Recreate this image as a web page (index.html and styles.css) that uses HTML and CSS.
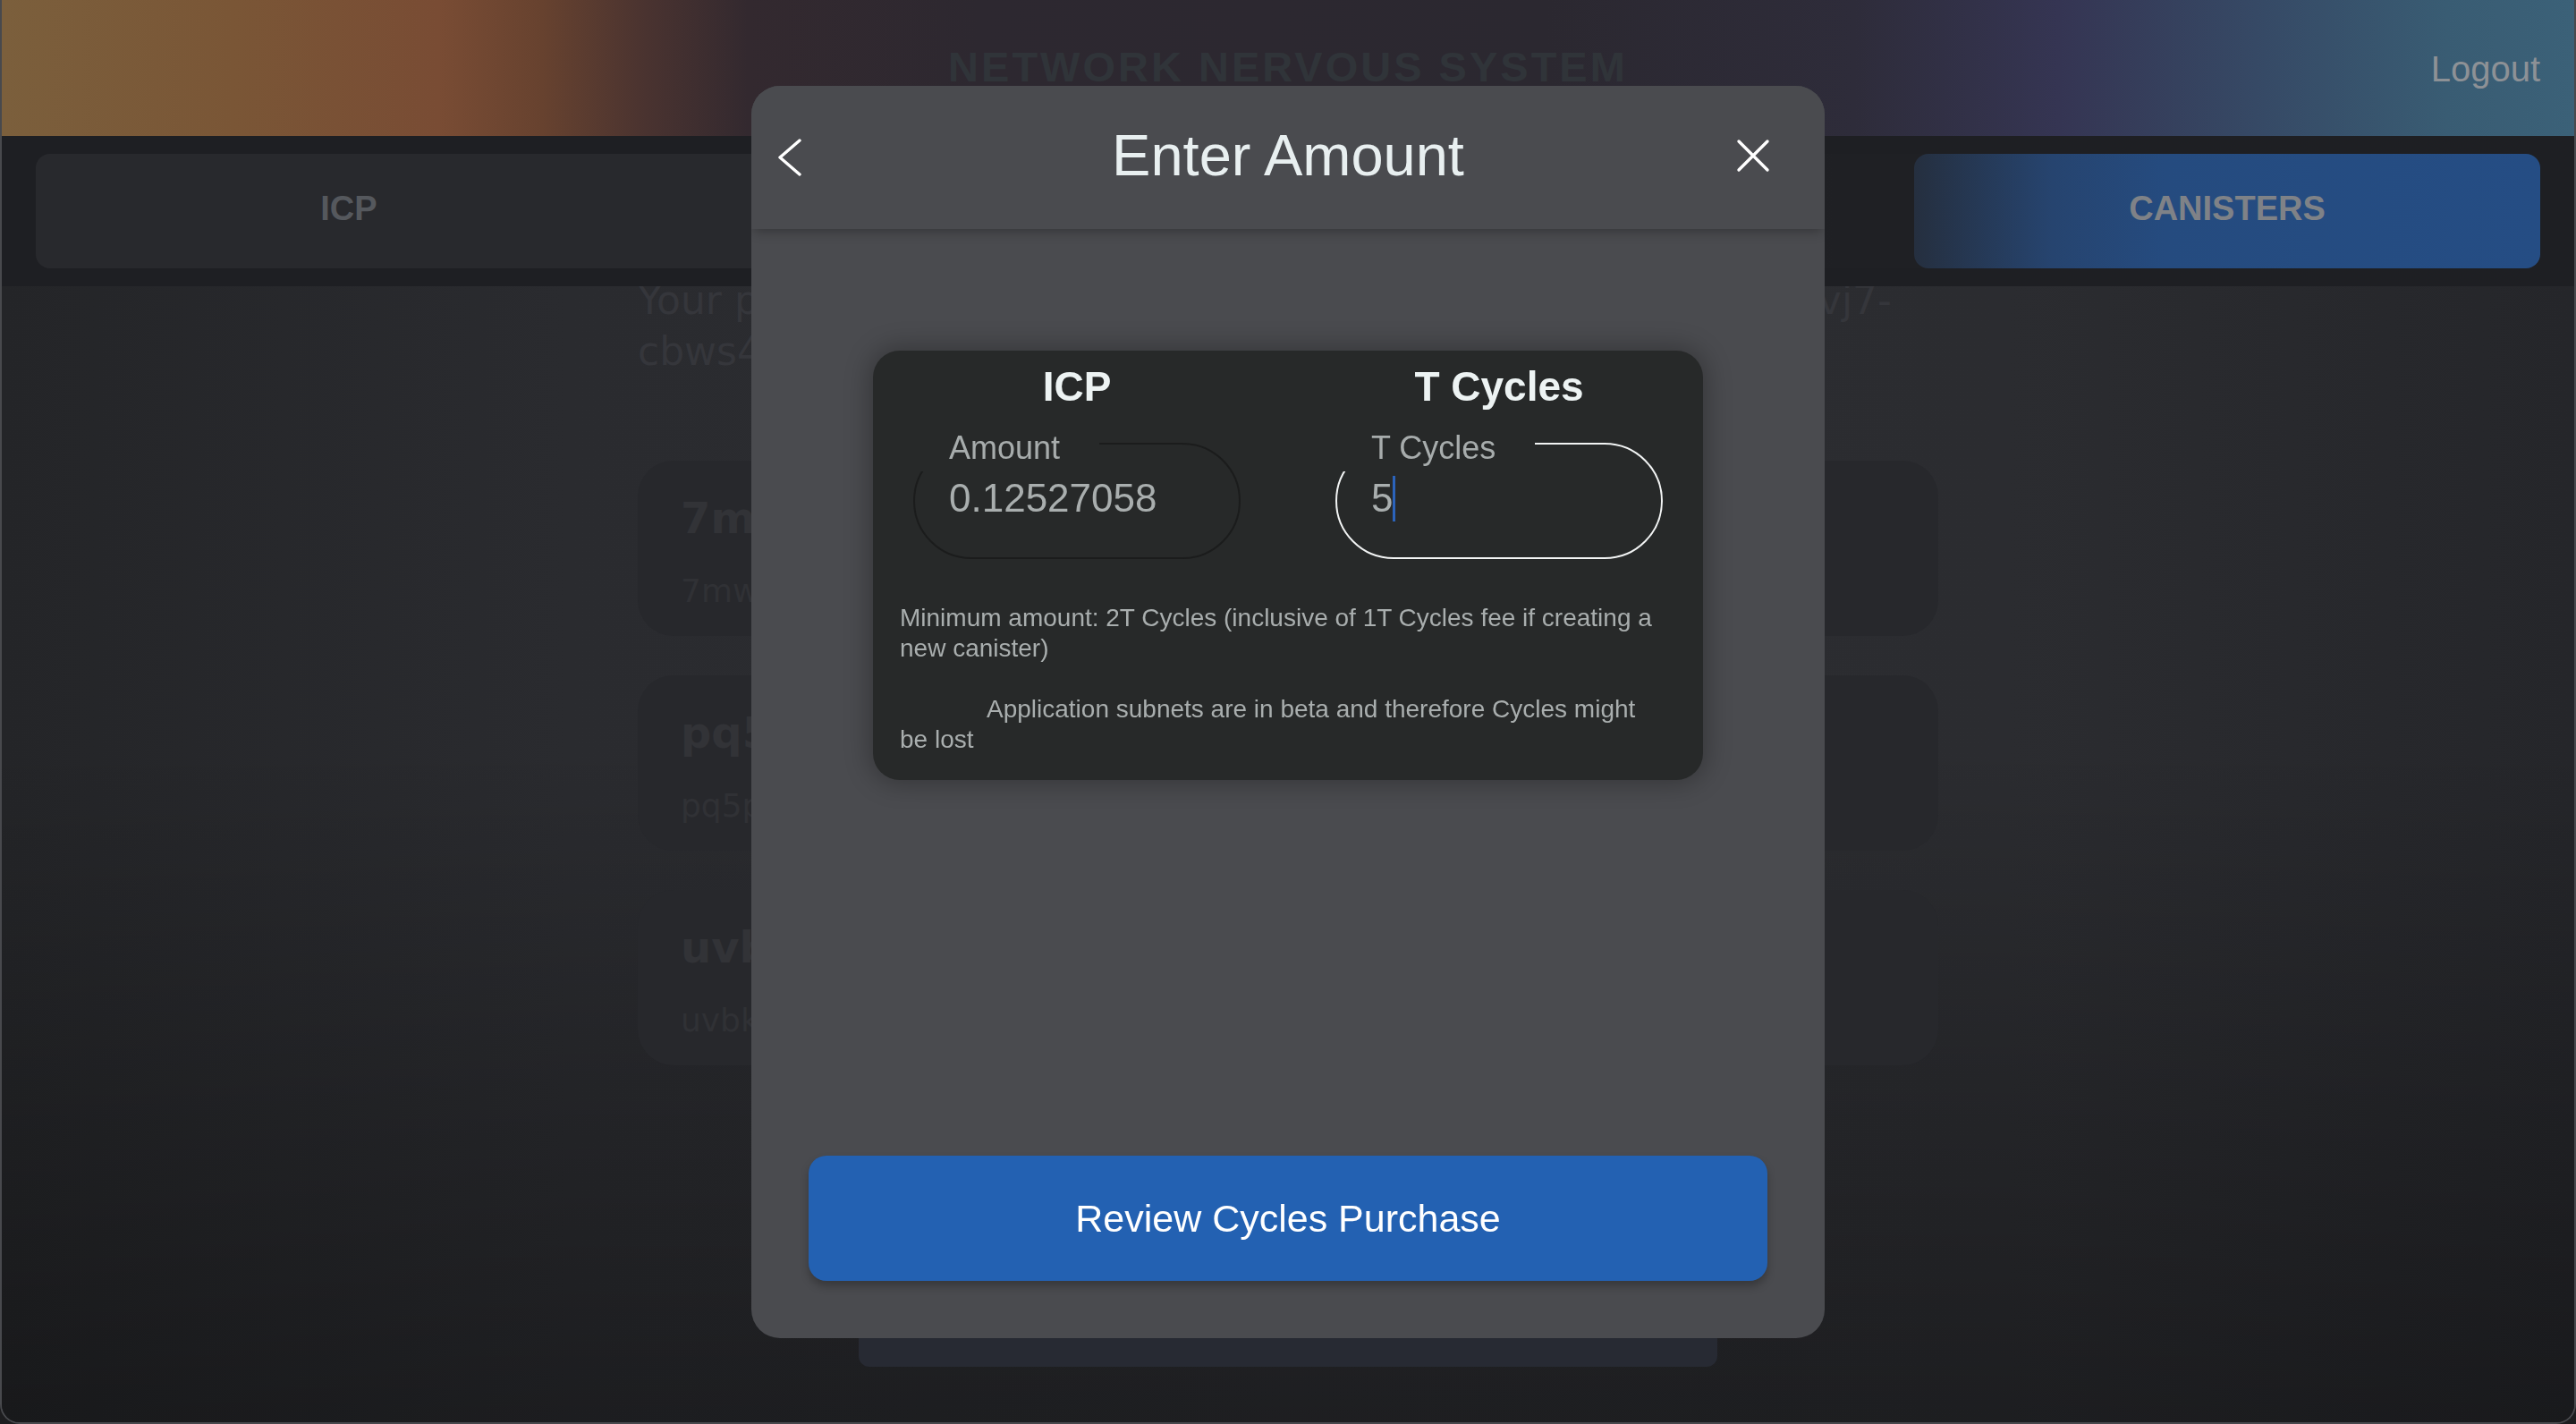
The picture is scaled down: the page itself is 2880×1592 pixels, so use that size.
FILE: index.html
```html
<!DOCTYPE html>
<html lang="en">
<head>
<meta charset="utf-8">
<title>Network Nervous System</title>
<link rel="stylesheet" href="styles.css">
</head>
<body>
<div class="window">
  <header class="topbar">
    <span></span>
    <h1 class="brand">NETWORK NERVOUS SYSTEM</h1>
    <a class="logout">Logout</a>
  </header>
  <nav class="tabs">
    <div class="tabs-track">
      <div class="tab">ICP</div>
      <div class="tab">NEURONS</div>
      <div class="tab">VOTING</div>
      <div class="tab active">CANISTERS</div>
    </div>
  </nav>
  <main class="content">
    <div class="principal">
      <div class="principal-line"><span>Your principal is</span><span>ib3ac-rrxs2-vj7-</span></div>
      <div>cbws4-qae</div>
    </div>
    <div class="canister-list">
      <div class="canister-card">
        <div class="cname">7mwe6</div>
        <div class="cid">7mwe6-qi</div>
      </div>
      <div class="canister-card">
        <div class="cname">pq5pz</div>
        <div class="cid">pq5pz-ka</div>
      </div>
      <div class="canister-card">
        <div class="cname">uvbk2-4yaaa</div>
        <div class="cid">uvbk2-4yaaa-aaaai-qahcq-cai</div>
      </div>
    </div>
    <div class="footer-action"></div>
  </main>
</div>

<div class="modal">
  <div class="modal-header">
    <button class="icon-btn back" aria-label="Back">
      <svg width="28" height="42" viewBox="0 0 28 42"><polyline points="25,2 3,21 25,40" fill="none" stroke="#ffffff" stroke-width="3.4" stroke-linecap="round" stroke-linejoin="round"/></svg>
    </button>
    <h2 class="modal-title">Enter Amount</h2>
    <button class="icon-btn close" aria-label="Close">
      <svg width="38" height="38" viewBox="0 0 38 38"><path d="M3 3 L35 35 M35 3 L3 35" fill="none" stroke="#ffffff" stroke-width="3.4" stroke-linecap="round"/></svg>
    </button>
  </div>
  <div class="modal-body">
    <div class="convert-card">
      <div class="columns">
        <div class="col">
          <h3 class="col-title">ICP</h3>
          <div class="field">
            <span class="field-label">Amount</span>
            <div class="field-value">0.12527058</div>
          </div>
        </div>
        <div class="col">
          <h3 class="col-title">T Cycles</h3>
          <div class="field focused">
            <span class="field-label">T Cycles</span>
            <div class="field-value">5<span class="caret"></span></div>
          </div>
        </div>
      </div>
      <p class="note">Minimum amount: 2T Cycles (inclusive of 1T Cycles fee if creating a new canister)</p>
      <p class="note second"><span class="indent"></span>Application subnets are in beta and therefore Cycles might be lost</p>
    </div>
    <button class="review-btn">Review Cycles Purchase</button>
  </div>
</div>
</body>
</html>
```

FILE: styles.css
```css
* {
  box-sizing: border-box;
}

html {
  background: #1d1d1f;
}

body {
  margin: 0;
  width: 2880px;
  height: 1592px;
  overflow: hidden;
  font-family: "Liberation Sans", Arial, sans-serif;
}

.window {
  height: 1592px;
  display: flex;
  flex-direction: column;
  border: 2px solid #48494d;
  border-top: 0;
  border-radius: 0 0 22px 22px;
  overflow: hidden;
}

/* ---------- top bar ---------- */
.topbar {
  height: 152px;
  flex: none;
  display: grid;
  grid-template-columns: 1fr auto 1fr;
  align-items: baseline;
  padding: 51px 38px 0;
  background: linear-gradient(90deg,
    #7b5f3c 0%,
    #7a5636 9%,
    #794c34 17%,
    #67422f 21%,
    #4a3330 25%,
    #33292f 29%,
    #2d2830 38%,
    #2b2830 60%,
    #2e2c3a 72%,
    #353553 80%,
    #364a66 88%,
    #395c73 95%,
    #3b6178 100%);
}

.brand {
  margin: 0;
  font-size: 47px;
  line-height: 47px;
  font-weight: 700;
  letter-spacing: 3px;
  color: #303439;
}

.logout {
  justify-self: end;
  font-size: 40px;
  line-height: 40px;
  color: #8d9196;
}

/* ---------- tabs ---------- */
.tabs {
  height: 168px;
  flex: none;
  padding: 20px 38px;
  background: #1e1f23;
  position: relative;
  z-index: 1;
}

.tabs-track {
  height: 100%;
  display: grid;
  grid-template-columns: repeat(4, 1fr);
  border-radius: 16px;
  background: linear-gradient(90deg, #28292d 0%, #28292d 30%, #222327 62%, #1f2024 72%, #1f2024 100%);
}

.tab {
  display: flex;
  align-items: center;
  justify-content: center;
  padding-bottom: 6px;
  border-radius: 16px;
  color: #55585d;
  font-size: 38px;
  font-weight: 700;
}

.tab.active {
  background: linear-gradient(90deg, #252f3f 0%, #26446f 22%, #254b7f 40%, #254d84 100%);
  color: #7f8287;
}

/* ---------- page content (behind the modal) ---------- */
.content {
  flex: 1;
  display: flex;
  flex-direction: column;
  padding: 0 711px 62px;
  background:
    linear-gradient(180deg, rgba(0, 0, 0, 0) 40%, rgba(0, 0, 0, 0.33) 100%),
    linear-gradient(90deg, #242528 0%, #2a2b2f 22%, #2c2d31 50%, #2b2c30 78%, #25262a 100%);
}

.principal {
  margin-top: -13px;
  font-family: "DejaVu Sans", sans-serif;
  font-size: 44px;
  line-height: 57px;
  color: #35363b;
}

.principal-line {
  display: flex;
  justify-content: space-between;
  padding-right: 52px;
}

.canister-list {
  margin-top: 94px;
  display: flex;
  flex-direction: column;
  gap: 44px;
}

.canister-card {
  height: 196px;
  border-radius: 40px;
  background: #27282c;
  padding: 35px 48px 0;
  font-family: "DejaVu Sans", sans-serif;
}

.cname {
  font-size: 48px;
  line-height: 58px;
  font-weight: 700;
  color: #323337;
}

.cid {
  margin-top: 30px;
  font-size: 36px;
  line-height: 46px;
  color: #303135;
}

.footer-action {
  margin: auto auto 0;
  width: 960px;
  height: 80px;
  border-radius: 0 0 12px 12px;
  background: #272a33;
}

/* ---------- modal ---------- */
.modal {
  position: fixed;
  z-index: 10;
  top: 96px;
  left: 50%;
  margin-left: -600px;
  width: 1200px;
  height: 1400px;
  border-radius: 32px;
  background: #4a4b4f;
  display: flex;
  flex-direction: column;
  overflow: hidden;
}

.modal-header {
  height: 160px;
  flex: none;
  display: grid;
  grid-template-columns: 1fr auto 1fr;
  align-items: center;
  background: #4a4b4f;
  box-shadow: 0 6px 12px -3px rgba(0, 0, 0, 0.28);
  position: relative;
  z-index: 1;
}

.icon-btn {
  background: none;
  border: 0;
  padding: 0;
  display: flex;
}

.back {
  justify-self: start;
  margin-left: 29px;
}

.close {
  justify-self: end;
  margin-right: 61px;
  margin-bottom: 4px;
}

.modal-title {
  margin: 0 0 4px;
  font-size: 65px;
  line-height: 64px;
  font-weight: 400;
  color: #e8eff0;
}

.modal-body {
  flex: 1;
  display: flex;
  flex-direction: column;
  align-items: center;
  padding: 136px 64px 64px;
}

.convert-card {
  width: 928px;
  border-radius: 30px;
  background: #272929;
  padding: 14px 30px 28px;
  box-shadow: 0 0 28px 4px rgba(0, 0, 0, 0.28);
}

.columns {
  display: grid;
  grid-template-columns: 366px 366px;
  column-gap: 106px;
  justify-content: center;
}

.col-title {
  margin: 0 0 36px;
  text-align: center;
  font-size: 46px;
  line-height: 53px;
  font-weight: 700;
  color: #edf3f3;
}

.field {
  position: relative;
  height: 130px;
  border: 2px solid #1b1c1c;
  border-radius: 65px;
  padding: 35px 38px 0;
}

.field.focused {
  border-color: #f2f4f4;
}

.field-label {
  position: absolute;
  left: -2px;
  top: -16px;
  padding: 0 44px 6px 40px;
  background: #272929;
  font-size: 36px;
  line-height: 40px;
  color: #a7acac;
}

.field-value {
  font-size: 44px;
  line-height: 50px;
  color: #a9aeae;
}

.caret {
  display: inline-block;
  width: 3px;
  height: 51px;
  vertical-align: top;
  background: #2b63bb;
}

.note {
  margin: 49px 0 0;
  max-width: 850px;
  font-size: 28px;
  line-height: 34px;
  color: #a9aeae;
}

.note.second {
  margin-top: 34px;
}

.indent {
  display: inline-block;
  width: 97px;
}

.review-btn {
  margin-top: auto;
  width: 100%;
  height: 140px;
  border: 0;
  border-radius: 20px;
  background: #2361b2;
  color: #ffffff;
  font-family: "Liberation Sans", Arial, sans-serif;
  font-size: 43px;
  box-shadow: 0 6px 10px rgba(0, 0, 0, 0.25);
}
```
